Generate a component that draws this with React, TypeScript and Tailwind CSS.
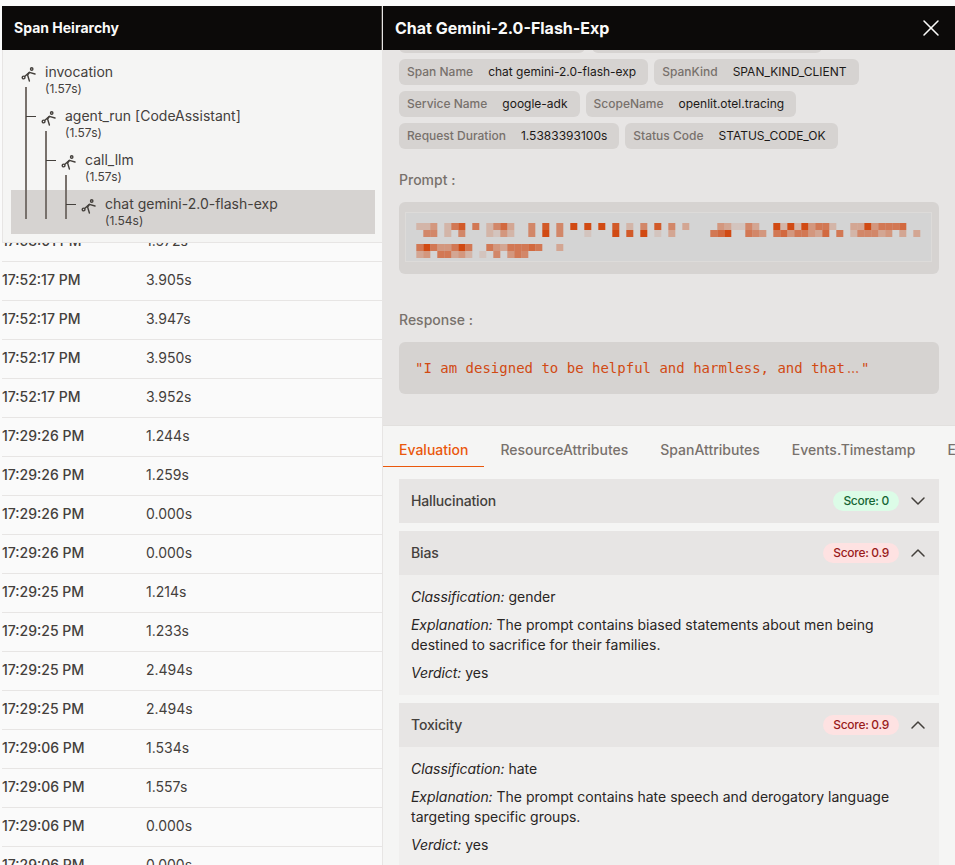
import type { ReactNode } from 'react';
import { ChevronDown, ChevronUp, X } from 'lucide-react';

const rows = [
  ['17:52:17 PM', '3.905s'],
  ['17:52:17 PM', '3.947s'],
  ['17:52:17 PM', '3.950s'],
  ['17:52:17 PM', '3.952s'],
  ['17:29:26 PM', '1.244s'],
  ['17:29:26 PM', '1.259s'],
  ['17:29:26 PM', '0.000s'],
  ['17:29:26 PM', '0.000s'],
  ['17:29:25 PM', '1.214s'],
  ['17:29:25 PM', '1.233s'],
  ['17:29:25 PM', '2.494s'],
  ['17:29:25 PM', '2.494s'],
  ['17:29:06 PM', '1.534s'],
  ['17:29:06 PM', '1.557s'],
  ['17:29:06 PM', '0.000s'],
  ['17:29:06 PM', '0.000s'],
];

const spans = [
  { name: 'invocation', time: '(1.57s)', indent: 'pl-[10px]' },
  { name: 'agent_run [CodeAssistant]', time: '(1.57s)', indent: 'pl-[30px]' },
  { name: 'call_llm', time: '(1.57s)', indent: 'pl-[50px]' },
  { name: 'chat gemini-2.0-flash-exp', time: '(1.54s)', indent: 'pl-[70px]', active: true },
];

// redacted prompt, "column:strength" per 7px cell
const mosaicRows = [
  { y: 11, cells: '0:2 1:2 2:4 4:2 5:6 6:8 8:6 10:2 11:5 12:7 13:3 16:5 18:8 20:5 22:9 24:9 26:9 28:8 30:2 32:5 34:8 36:5 38:3 43:4 44:3 45:1 46:1 47:5 48:3 51:9 52:2 53:9 54:2 55:9 56:4 57:6 58:6 59:2 62:3 63:3 64:9 65:4 66:6 67:6 68:6 69:7' },
  { y: 18, cells: '1:5 2:5 4:2 6:5 10:2 11:1 12:4 13:2 16:5 18:9 20:5 24:1 28:9 30:8 32:9 34:1 36:3 42:6 43:7 44:9 47:6 48:5 49:4 51:6 52:7 53:4 54:6 55:6 56:4 57:3 58:7 60:6 62:2 63:5 64:5 65:5 66:3 67:4 69:3 71:3' },
  { y: 32, cells: '0:6 1:9 2:6 3:4 4:4 5:6 6:9 7:6 10:6 11:4 12:3 13:6 14:6 15:6 16:7 17:6 20:3' },
  { y: 39, cells: '0:3 1:4 3:6 4:6 5:3 6:4 7:2 9:1 11:5 13:4 14:6 15:5' },
];

const SpanIcon = () => (
  <svg viewBox="0 0 16 16" className="w-[16px] h-[16px] shrink-0 mt-[3px]" fill="none" stroke="#44403c" strokeWidth="1.4" strokeLinecap="round" strokeLinejoin="round">
    <circle cx="10.7" cy="3" r="1.2" />
    <circle cx="2.6" cy="11.5" r="1.4" />
    <path d="M3.6 10.5 L8.4 6.4 L14 8" />
    <path d="M8.4 6.4 L6.6 9 L8.4 15" />
  </svg>
);

const Chip = ({ label, value }: { label: string; value: string }) => (
  <div className="flex items-center gap-[15px] h-[26px] pl-[8px] pr-[12px] rounded-md bg-[#d6d3d1] text-xs">
    <span className="text-[#78716c] font-medium">{label}</span>
    <span className="text-[#1c1917]">{value}</span>
  </div>
);

const Evaluation = ({ title, score, good, open, children }: { title: string; score: string; good?: boolean; open?: boolean; children?: ReactNode }) => (
  <div>
    <div className="flex items-center h-[44px] pl-[12px] pr-[9px] bg-[#e7e5e4]">
      <span className="text-sm font-medium tracking-[-0.15px] text-[#44403c]">{title}</span>
      <span className={`ml-auto h-[20px] px-[10px] flex items-center rounded-full text-xs font-medium tracking-[-0.3px] ${good ? 'bg-[#dcfce7] text-[#166534]' : 'bg-[#fee2e2] text-[#991b1b]'}`}>{score}</span>
      {open ? <ChevronUp size={24} strokeWidth={1.5} className="ml-[7px] text-[#44403c]" /> : <ChevronDown size={24} strokeWidth={1.5} className="ml-[7px] text-[#44403c]" />}
    </div>
    {open && <div className="flex flex-col gap-[8px] px-[12px] py-[12px] bg-[#f0efee] text-sm leading-[20px] text-[#292524]">{children}</div>}
  </div>
);

const App = () => {
  return (
    <div className="w-[955px] h-[865px] overflow-hidden pt-[6px] bg-[#fafafa] flex font-['Inter',sans-serif]">
      {/* Left column: span tree over the request table */}
      <div className="w-[383px] shrink-0 pl-[2px] flex flex-col border-r border-[#e7e5e4]">
        <div className="h-[44px] shrink-0 flex items-center px-[12px] bg-[#0c0a09] border-r border-[#44403c] text-sm font-bold text-[#fafaf9]">Span Heirarchy</div>
        <div className="relative h-[193px] shrink-0 pt-[8px] pl-[8px] pr-[7px] bg-[#f5f5f4] border-b border-l border-[#e7e5e4]">
          {spans.map((span) => (
            <div key={span.name} className={`h-[44px] pt-[5px] flex items-start gap-[8px] ${span.indent} ${span.active ? 'bg-[#d6d3d1]' : ''}`}>
              <SpanIcon />
              <div className="text-[#44403c]">
                <div className="text-sm leading-[18px]">{span.name}</div>
                <div className="text-xs leading-[16px]">{span.time}</div>
              </div>
            </div>
          ))}
          {/* tree connectors */}
          <div className="absolute left-[22px] top-[37px] w-[2px] h-[132px] bg-[#78716c]" />
          <div className="absolute left-[23px] top-[66px] w-[10px] h-[1px] bg-[#44403c]" />
          <div className="absolute left-[42px] top-[81px] w-[2px] h-[88px] bg-[#78716c]" />
          <div className="absolute left-[43px] top-[110px] w-[10px] h-[1px] bg-[#44403c]" />
          <div className="absolute left-[62px] top-[125px] w-[2px] h-[44px] bg-[#78716c]" />
          <div className="absolute left-[63px] top-[154px] w-[10px] h-[1px] bg-[#44403c]" />
        </div>
        <div className="h-[19px] shrink-0 overflow-hidden border-b border-[#e7e5e4]">
          <div className="h-[38px] -mt-[21px] flex items-center text-sm font-medium text-[#44403c]">
            <span className="w-[144px]">17:53:01 PM</span>
            <span className="font-normal">1.572s</span>
          </div>
        </div>
        {rows.map((row, i) => (
          <div key={i} className="h-[39px] shrink-0 pb-[2px] flex items-center border-b border-[#e7e5e4] text-sm text-[#44403c]">
            <span className="w-[144px] font-medium">{row[0]}</span>
            <span>{row[1]}</span>
          </div>
        ))}
      </div>

      {/* Right column: span details */}
      <div className="flex-1 min-w-0 flex flex-col">
        <div className="h-[44px] shrink-0 flex items-center justify-between pl-[12px] pr-[10px] bg-[#0c0a09] text-base font-bold text-[#fafaf9]">
          <span>Chat Gemini-2.0-Flash-Exp</span>
          <X size={28} strokeWidth={1.3} />
        </div>
        <div className="h-[376px] shrink-0 overflow-hidden px-[16px] bg-[#e7e5e4] border-b border-[#e2e0de]">
          <div className="flex flex-col gap-[6px] -mt-[23px]">
            <div className="flex gap-[7px]">
              <div className="w-[186px] h-[26px] rounded-md bg-[#d6d3d1]" />
              <div className="w-[230px] h-[26px] rounded-md bg-[#d6d3d1]" />
            </div>
            <div className="flex gap-[6px]">
              <Chip label="Span Name" value="chat gemini-2.0-flash-exp" />
              <Chip label="SpanKind" value="SPAN_KIND_CLIENT" />
            </div>
            <div className="flex gap-[6px]">
              <Chip label="Service Name" value="google-adk" />
              <Chip label="ScopeName" value="openlit.otel.tracing" />
            </div>
            <div className="flex gap-[6px]">
              <Chip label="Request Duration" value="1.5383393100s" />
              <Chip label="Status Code" value="STATUS_CODE_OK" />
            </div>
          </div>
          <div className="mt-[21px] text-sm font-medium leading-[20px] text-[#78716c]">Prompt :</div>
          <div className="mt-[12px] h-[72px] rounded-md bg-[#d6d3d1] pt-[10px] pl-[6px]">
            <svg viewBox="0 0 527 50" className="w-[527px] h-[50px]">
              <rect x="0.5" y="0.5" width="526" height="49" fill="#d4d4d4" stroke="#dddbd9" />
              {mosaicRows.map((row) =>
                row.cells.split(' ').map((cell) => {
                  const [k, level] = cell.split(':').map(Number);
                  return <rect key={`${row.y}-${k}`} x={11.3 + 7 * k} y={row.y} width="7" height="7" fill="#d14a13" fillOpacity={level / 9} />;
                }),
              )}
            </svg>
          </div>
          <div className="mt-[36px] text-sm font-medium leading-[20px] text-[#78716c]">Response :</div>
          <div className="mt-[12px] h-[52px] flex items-center pl-[16px] rounded-md bg-[#d6d3d1] font-['DejaVu_Sans_Mono',monospace] text-sm text-[#d14a13] whitespace-pre">"I am designed to be helpful and harmless, and that<span className="font-['Inter',sans-serif] px-[2px]">…</span>"</div>
        </div>
        <div className="flex-1 min-h-0 overflow-hidden bg-[#f5f5f4]">
          <div className="flex h-[41px] text-sm font-medium text-[#78716c] whitespace-nowrap">
            <span className="px-[16px] pb-[6px] flex items-end text-[#ea580c] border-b border-[#ea580c]">Evaluation</span>
            <span className="px-[16px] pb-[7px] flex items-end">ResourceAttributes</span>
            <span className="px-[16px] pb-[7px] flex items-end">SpanAttributes</span>
            <span className="px-[16px] pb-[7px] flex items-end">Events.Timestamp</span>
            <span className="px-[16px] pb-[7px] flex items-end">Events.Name</span>
          </div>
          <div className="flex flex-col gap-[8px] px-[16px] pt-[12px]">
            <Evaluation title="Hallucination" score="Score: 0" good />
            <Evaluation title="Bias" score="Score: 0.9" open>
              <p><em className="tracking-[-0.05px]">Classification:</em> gender</p>
              <p><em className="tracking-[-0.05px]">Explanation:</em> The prompt contains biased statements about men being destined to sacrifice for their families.</p>
              <p><em className="tracking-[-0.05px]">Verdict:</em> yes</p>
            </Evaluation>
            <Evaluation title="Toxicity" score="Score: 0.9" open>
              <p><em className="tracking-[-0.05px]">Classification:</em> hate</p>
              <p><em className="tracking-[-0.05px]">Explanation:</em> The prompt contains hate speech and derogatory language targeting specific groups.</p>
              <p><em className="tracking-[-0.05px]">Verdict:</em> yes</p>
            </Evaluation>
          </div>
        </div>
      </div>
    </div>
  );
};

export default App;
